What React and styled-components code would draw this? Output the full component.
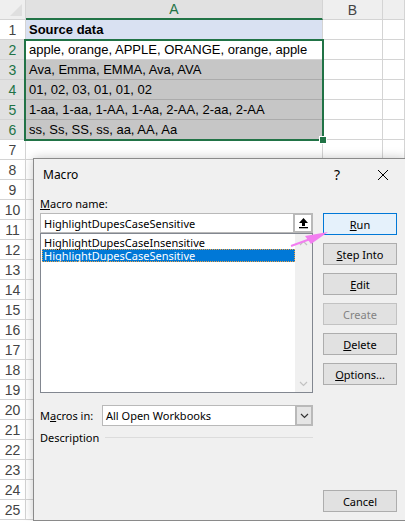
import React from 'react';
import styled, { createGlobalStyle } from 'styled-components';

const Global = createGlobalStyle`
    body {
        margin: 0;
        background: #ffffff;
        overflow: hidden;
    }
    * { box-sizing: border-box; }
`

const Page = styled.div `
    position: relative;
    width: 405px;
    height: 521px;
    overflow: hidden;
    font-family: "Liberation Sans", Arial, sans-serif;
`
const Grid = styled.div `
    display: flex;
    flex-direction: column;
`
const Row = styled.div `
    display: grid;
    grid-template-columns: 26px 297px 60px 1fr;
    height: 20px;
`
const Corner = styled.div `
    background: #efefef;
    border-right: 1px solid #d4d4d4;
    border-bottom: 1px solid #d4d4d4;
    position: relative;
    &::after {
        content: "";
        position: absolute;
        right: 3px;
        bottom: 3px;
        border-left: 12px solid transparent;
        border-bottom: 12px solid #dfdfdf;
    }
`
const ColHead = styled.div `
    background: ${ p => p.$active ? '#e1e1e1' : '#efefef' };
    color: ${ p => p.$active ? '#217346' : '#444444' };
    border-right: 1px solid #d4d4d4;
    border-bottom: ${ p => p.$active ? '2px solid #217346' : '1px solid #d4d4d4' };
    display: flex;
    align-items: center;
    justify-content: center;
    font-size: 14px;
`
const RowHead = styled.div `
    background: ${ p => p.$active ? '#e1e1e1' : '#ffffff' };
    color: ${ p => p.$active ? '#217346' : '#444444' };
    border-right: 1px solid #d4d4d4;
    border-bottom: 1px solid #d4d4d4;
    display: flex;
    align-items: center;
    justify-content: center;
    font-size: 14px;
`
const Cell = styled.div `
    background: ${ p => p.$fill || '#ffffff' };
    border-right: 1px solid ${ p => p.$fill === '#c6c6c6' ? '#ababab' : '#d4d4d4' };
    border-bottom: 1px solid ${ p => p.$fill === '#c6c6c6' ? '#ababab' : '#d4d4d4' };
    padding-left: 3px;
    font-size: 13px;
    font-weight: ${ p => p.$bold ? 'bold' : 'normal' };
    color: #000;
    white-space: nowrap;
    overflow: hidden;
    line-height: 19px;
`
const Selection = styled.div `
    position: absolute;
    left: 24px;
    top: 39px;
    width: 300px;
    height: 102px;
    border: 2px solid #217346;
    pointer-events: none;
    &::after {
        content: "";
        position: absolute;
        right: -5px;
        bottom: -5px;
        width: 6px;
        height: 6px;
        background: #217346;
        border: 1px solid #ffffff;
    }
`

const Dialog = styled.div `
    position: absolute;
    left: 33px;
    top: 158px;
    width: 373px;
    height: 363px;
    background: #f0f0f0;
    border: 1px solid #8a8a8a;
    box-shadow: 0 0 10px rgba(0, 0, 0, 0.22);
    font-family: "Noto Sans", "Liberation Sans", sans-serif;
    font-size: 11px;
    color: #000;
    display: flex;
    flex-direction: column;
`
const TitleBar = styled.div `
    height: 31px;
    display: flex;
    align-items: center;
    padding-left: 9px;
    flex-shrink: 0;
    font-size: 12px;
`
const Title = styled.div `
    flex: 1;
`
const TitleButton = styled.div `
    width: ${ p => p.$w || 46 }px;
    height: 31px;
    display: flex;
    align-items: center;
    justify-content: center;
    font-size: 14px;
`
const Body = styled.div `
    flex: 1;
    display: flex;
    gap: 10px;
    padding: 0 0 8px 6px;
`
const LeftCol = styled.div `
    width: 273px;
    display: flex;
    flex-direction: column;
`
const Label = styled.div `
    height: 16px;
    line-height: 16px;
    margin-top: ${ p => p.$top || 0 }px;
    margin-bottom: 1px;
`
const TextBox = styled.div `
    height: 20px;
    background: #ffffff;
    border: 1px solid #b9b9b9;
    display: flex;
    align-items: center;
    padding-left: 3px;
`
const TextValue = styled.div `
    flex: 1;
`
const UpButton = styled.div `
    width: 20px;
    height: 20px;
    margin-right: -1px;
    border: 2px solid #b9b9b9;
    background: #ffffff;
    display: flex;
    align-items: center;
    justify-content: center;
`
const ListBox = styled.div `
    height: 160px;
    background: #ffffff;
    border: 1px solid #828790;
    display: flex;
`
const ListItems = styled.div `
    flex: 1;
    padding: 2px 0 0 1px;
`
const Item = styled.div `
    height: 13px;
    line-height: 13px;
    padding-left: 2px;
    white-space: nowrap;
    background: ${ p => p.$selected ? '#0078d7' : 'transparent' };
    color: ${ p => p.$selected ? '#ffffff' : '#000000' };
    outline: ${ p => p.$selected ? '1px dotted #f0a040' : 'none' };
    outline-offset: -1px;
`
const ScrollTrack = styled.div `
    width: 17px;
    background: #f0f0f0;
    display: flex;
    flex-direction: column;
    justify-content: space-between;
    align-items: center;
    padding: 6px 0 5px;
`
const SelectRow = styled.div `
    display: flex;
    align-items: center;
    margin-top: 12px;
    height: 21px;
`
const SelectLabel = styled.div `
    width: 62px;
`
const Select = styled.div `
    flex: 1;
    height: 21px;
    background: #ffffff;
    border: 1px solid #b9b9b9;
    display: flex;
    align-items: center;
    padding-left: 3px;
`
const DropButton = styled.div `
    width: 18px;
    height: 21px;
    margin: -1px -1px -1px 0;
    background: #e5e5e5;
    border: 2px solid #b9b9b9;
    display: flex;
    align-items: center;
    justify-content: center;
`
const Section = styled.div `
    display: flex;
    align-items: center;
    gap: 6px;
    margin-top: 3px;
    height: 16px;
    &::after {
        content: "";
        flex: 1;
        height: 1px;
        background: #dcdcdc;
    }
`
const RightCol = styled.div `
    width: 74px;
    display: flex;
    flex-direction: column;
    gap: 8px;
    padding-top: 23px;
`
const Button = styled.div `
    height: 22px;
    display: flex;
    align-items: center;
    justify-content: center;
    background: ${ p => p.$primary ? '#e5f1fb' : '#e1e1e1' };
    border: 1px solid ${ p => p.$primary ? '#0078d7' : p.$disabled ? '#c2c2c2' : '#adadad' };
    color: ${ p => p.$disabled ? '#838383' : '#000000' };
    margin-top: ${ p => p.$push ? 'auto' : '0' };
`
const Pointer = styled.svg `
    position: absolute;
    left: 285px;
    top: 225px;
    pointer-events: none;
`

const rows = [
    { n: 1, text: 'Source data', bold: true, fill: '#d9e1f2' },
    { n: 2, text: 'apple, orange, APPLE, ORANGE, orange, apple', active: true },
    { n: 3, text: 'Ava, Emma, EMMA, Ava, AVA', active: true, fill: '#c6c6c6' },
    { n: 4, text: '01, 02, 03, 01, 01, 02', active: true, fill: '#c6c6c6' },
    { n: 5, text: '1-aa, 1-aa, 1-AA, 1-Aa, 2-AA, 2-aa, 2-AA', active: true, fill: '#c6c6c6' },
    { n: 6, text: 'ss, Ss, SS, ss, aa, AA, Aa', active: true, fill: '#c6c6c6' },
];
for (let i = 7; i <= 25; i++) rows.push({ n: i, text: '' });

function Chevron({ up, color }) {
    return (
        <svg width="9" height="6" viewBox="0 0 9 6">
            <polyline points={ up ? '1,5 4.5,1.5 8,5' : '1,1 4.5,4.5 8,1' } fill="none" stroke={ color } strokeWidth="1.2" />
        </svg>
    );
}

export default function App() {
    return (
        <Page>
            <Global />
            <Grid>
                <Row>
                    <Corner />
                    <ColHead $active>A</ColHead>
                    <ColHead>B</ColHead>
                    <ColHead />
                </Row>
                { rows.map(r => (
                    <Row key={ r.n }>
                        <RowHead $active={ r.active }>{ r.n }</RowHead>
                        <Cell $fill={ r.fill } $bold={ r.bold }>{ r.text }</Cell>
                        <Cell />
                        <Cell />
                    </Row>
                )) }
            </Grid>
            <Selection />

            <Dialog>
                <TitleBar>
                    <Title>Macro</Title>
                    <TitleButton $w={ 46 }>?</TitleButton>
                    <TitleButton $w={ 45 }>
                        <svg width="12" height="12" viewBox="0 0 12 12">
                            <path d="M1 1 L11 11 M11 1 L1 11" stroke="#000" strokeWidth="1" />
                        </svg>
                    </TitleButton>
                </TitleBar>
                <Body>
                    <LeftCol>
                        <Label $top={ 6 }><u>M</u>acro name:</Label>
                        <TextBox>
                            <TextValue>HighlightDupesCaseSensitive</TextValue>
                            <UpButton>
                                <svg width="11" height="12" viewBox="0 0 11 12">
                                    <path d="M5.5 1 L10 6 L7 6 L7 9 L4 9 L4 6 L1 6 Z" fill="#000" />
                                    <rect x="1" y="10" width="9" height="1.3" fill="#000" />
                                </svg>
                            </UpButton>
                        </TextBox>
                        <ListBox>
                            <ListItems>
                                <Item>HighlightDupesCaseInsensitive</Item>
                                <Item $selected>HighlightDupesCaseSensitive</Item>
                            </ListItems>
                            <ScrollTrack>
                                <Chevron up color="#c2c2c2" />
                                <Chevron color="#c2c2c2" />
                            </ScrollTrack>
                        </ListBox>
                        <SelectRow>
                            <SelectLabel>M<u>a</u>cros in:</SelectLabel>
                            <Select>
                                <TextValue>All Open Workbooks</TextValue>
                                <DropButton>
                                    <Chevron color="#333" />
                                </DropButton>
                            </Select>
                        </SelectRow>
                        <Section>Description</Section>
                    </LeftCol>
                    <RightCol>
                        <Button $primary><u>R</u>un</Button>
                        <Button><u>S</u>tep Into</Button>
                        <Button><u>E</u>dit</Button>
                        <Button $disabled>Create</Button>
                        <Button><u>D</u>elete</Button>
                        <Button><u>O</u>ptions...</Button>
                        <Button $push>Cancel</Button>
                    </RightCol>
                </Body>
            </Dialog>

            <Pointer width="50" height="30" viewBox="0 0 50 30">
                <line x1="6" y1="21" x2="28" y2="13" stroke="#f27ef0" strokeWidth="2" />
                <polygon points="43,7 20,11 26,19" fill="#f27ef0" />
            </Pointer>
        </Page>
    );
}
